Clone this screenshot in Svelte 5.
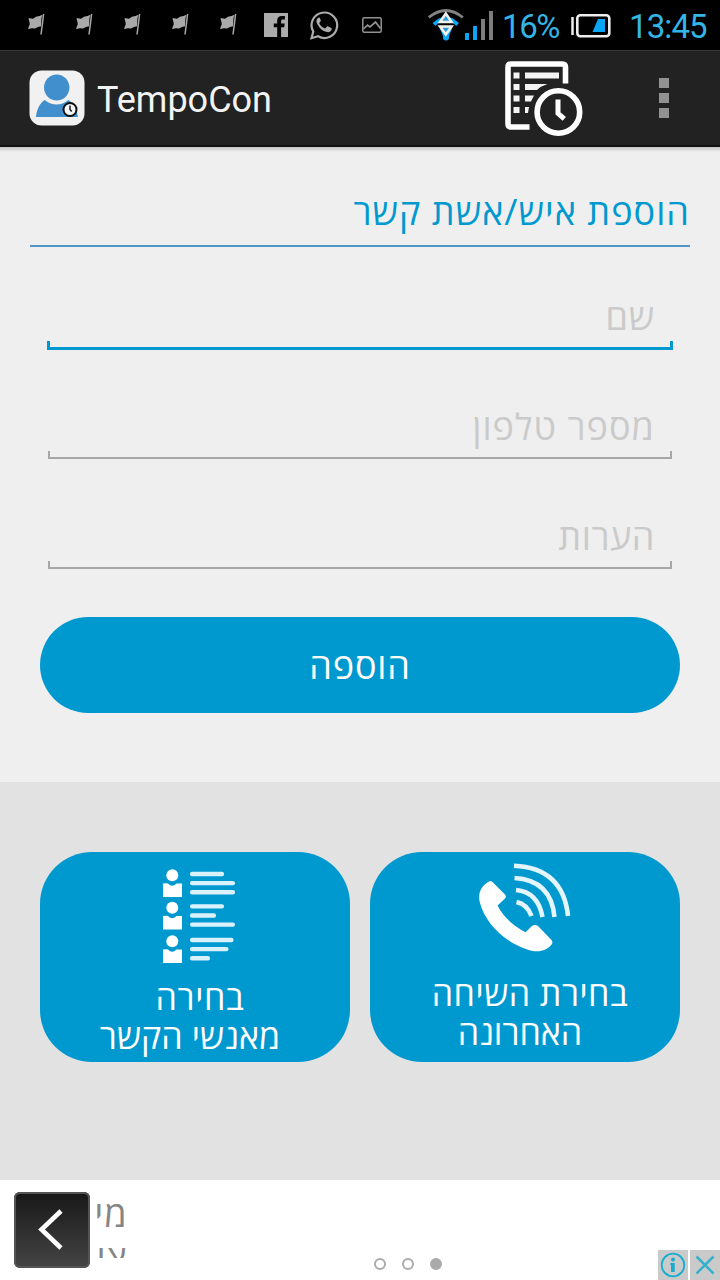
<script>
  const flags = [0, 1, 2, 3, 4];
  const fields = [
    { label: 'שם', focused: true, spacing: 0.8 },
    { label: 'מספר טלפון', focused: false, spacing: 1.05 },
    { label: 'הערות', focused: false, spacing: 0.6 }
  ];
  const contactRows = [
    { y: 0, lines: [34, 45, 45] },
    { y: 32.4, lines: [34, 26, 45] },
    { y: 66, lines: [43.5, 38.5, 20] }
  ];
</script>

<div class="screen">
  <header class="status">
    <div class="notices">
      {#each flags as f (f)}
        <svg class="flag" width="17" height="22" viewBox="0 0 17 22">
          <path d="M.5 4 5 4.8 8 2.8 11.5 2 14.5 .8 13.5 4 13 12.3 10 13 7 14.5 4 14.2 0 15 1.8 10Z" fill="#a9a9a9" />
          <path d="M15.6 0 14.5 9 13 20.5" fill="none" stroke="#a9a9a9" stroke-width="1.5" />
        </svg>
      {/each}
      <svg class="fb" width="24" height="24" viewBox="0 0 24 24">
        <path fill="#ababab" fill-rule="evenodd" d="M0 0h24v24H0zM13.2 24h3.9v-9.7h3.1l.5-3.8h-3.6V8.2c0-1.3.5-1.8 1.8-1.8h2V3h-3c-3.200 0-4.700 1.700-4.700 4.600v2.900H9.800v3.800h3.400z" />
      </svg>
      <svg class="wa" width="30" height="31" viewBox="0 0 30 31">
        <path d="M2.500 28.200 4.300 21.600A12.800 12.700 0 1 1 9.100 26.300Z" fill="none" stroke="#ababab" stroke-width="2.200" />
        <path d="M10.700 7.800c-.8-.5-1.500-.3-2.100.4-1.500 1.600-1.400 3.700-.4 5.700 2 4 5.300 7 9.500 8.200 2.300.6 4.700-.5 5-3 .1-.8-.1-1-.8-1.400l-3-1.400c-.6-.3-.8-.1-1.200.4l-1 1.300c-.4.5-.8.5-1.400.2-2.400-1.100-3.900-2.700-4.900-4.700-.2-.5-.1-.7.3-1.100l1-1.300.1-.8z" fill="#ababab" />
      </svg>
      <svg class="pic" width="20" height="16" viewBox="0 0 20 16">
        <rect x=".8" y=".8" width="18.400" height="14.400" rx="1.500" fill="none" stroke="#929292" stroke-width="1.500" />
        <path d="M1.500 12 5.500 8.200 8 10 13.500 5 18.500 11.500" fill="none" stroke="#929292" stroke-width="1.700" />
      </svg>
    </div>
    <div class="system">
      <svg class="signal" width="68" height="34" viewBox="0 0 68 34">
        <path d="M.8 8.500Q17.800-5.500 34.800 8.500" fill="none" stroke="#828282" stroke-width="2.800" />
        <path d="M6 15.500Q17.800 4 29.600 15.500" fill="none" stroke="#0aa5f5" stroke-width="4" />
        <path d="M12 20h12l-3 7v3q-3 3-6 0v-3z" fill="#0aa5f5" />
        <path d="M12 13 17.800 4.500 23.600 13ZM12 17.500h11.600L17.800 25.500Z" fill="#2f9bd8" stroke="#f1f1ee" stroke-width="2.500" />
        <path d="M37 24h4v7h-4zM45 17h4v14h-4z" fill="#0aa5f5" />
        <path d="M53 10h4v21h-4zM61 2h4v29h-4z" fill="#7d7d7d" />
      </svg>
      <span class="percent">16%</span>
      <svg class="battery" width="40" height="24" viewBox="0 0 40 24">
        <path d="M1.500 3v18" stroke="#eee" stroke-width="2.500" />
        <rect x="6.300" y="1.300" width="32" height="21" rx="3" fill="none" stroke="#eee" stroke-width="2.600" />
        <path d="M27 5h7v13H21.500z" fill="#0aa5f5" />
      </svg>
      <span class="clock">13:45</span>
    </div>
  </header>

  <nav class="actionbar">
    <svg class="logo" width="56" height="56" viewBox="0 0 56 56">
      <rect x=".5" y=".5" width="55" height="55" rx="12" fill="#f1f1f1" />
      <ellipse cx="27.700" cy="17.500" rx="12.700" ry="13" fill="#428fce" />
      <path d="M7 47C7.500 40 10.500 33.500 15.500 30Q27.500 39 39.500 30C45 34 48 40 49 47Z" fill="#428fce" />
      <circle cx="41" cy="39.500" r="6.500" fill="#f5f5f5" stroke="#101010" stroke-width="2" />
      <path d="M41 35.500v4l1.700 2" fill="none" stroke="#101010" stroke-width="1.400" />
    </svg>
    <h1>TempoCon</h1>
    <svg class="history" width="80" height="76" viewBox="0 0 80 76">
      <path d="M24.500 66H6.200Q3 66 3 62.800V6.200Q3 3 6.200 3H57.300Q60.500 3 60.500 6.200V22.500" fill="none" stroke="#fff" stroke-width="5.600" />
      <path d="M8.500 11.500h6v6h-6zM8.500 23h6v6h-6zM8.500 34.500h6v6h-6zM8.500 46h6v6h-6zM20 11.500h34v6H20zM20 23h22.500Q36 25 32 29H20zM20 34.500h9L26 40.500h-6zM20 46h4l-1 6h-3z" fill="#f4f4f4" />
      <circle cx="53.400" cy="51" r="21.300" fill="none" stroke="#fff" stroke-width="5.600" />
      <path d="M53 38.500v13.800l6.300 5.500" fill="none" stroke="#fff" stroke-width="5" />
    </svg>
    <div class="overflow"><i></i><i></i><i></i></div>
  </nav>

  <main class="form" dir="rtl">
    <h2><span>הוספת איש/אשת קשר</span></h2>
    {#each fields as field (field.label)}
      <div class="field" class:focused={field.focused}><span style="letter-spacing: {field.spacing}px">{field.label}</span></div>
    {/each}
    <button class="add">הוספה</button>
  </main>

  <section class="choices">
    <button class="card contacts">
      <svg width="76" height="98" viewBox="0 0 76 98">
        {#each contactRows as row}
          <g transform="translate(0 {row.y})">
            <path d="M1 15.500Q5 15 6 15.500 10 20 14.500 15.500H20V29H1Z" fill="#fff" />
            <circle cx="10.300" cy="7.300" r="6" fill="#fff" />
            {#each row.lines as length, i}
              <rect x="28" y={3.8 + i * 9.1} width={length} height="4.400" rx="2" fill="#d9f1fb" />
            {/each}
          </g>
        {/each}
      </svg>
      <span class="line l1" dir="rtl">בחירה</span>
      <span class="line l2" dir="rtl">מאנשי הקשר</span>
    </button>
    <button class="card recent">
      <svg width="96" height="92" viewBox="0 0 96 92">
        <path d="M11.500 18.300Q13 17.500 14.500 19L27 31.500Q28.800 33.500 27 35.500L19.500 42.500Q28 59 47.500 69.300L54 63Q57 61 60 63L73.500 77Q75 79 74 81C68 89 58 90 48 86 25 78 7 59 2 40-1 30 4 22 11.500 18.300Z" fill="#fff" />
        <path d="M38.500 39Q49 41 53.500 53M38 27Q60 29 64.500 54M36.500 15Q73 17 76.500 54M36 2.800Q85 5 90 53" fill="none" stroke="#e3f5fd" stroke-width="4.600" />
      </svg>
      <span class="line l1" dir="rtl">בחירת השיחה</span>
      <span class="line l2" dir="rtl">האחרונה</span>
    </button>
  </section>

  <footer class="ad">
    <div class="back">
      <svg width="76" height="76" viewBox="0 0 76 76"><path d="M47 19 27.500 37.500 47 56" fill="none" stroke="#fff" stroke-width="4.600" /></svg>
    </div>
    <div class="adtext" dir="rtl"><span>מי</span><span>צי</span></div>
    <div class="dots"><i></i><i></i><i class="on"></i></div>
    <div class="badges">
      <svg width="30" height="30" viewBox="0 0 30 30">
        <path d="M0 0h30v30H0z" fill="#cacaca" />
        <circle cx="15" cy="15" r="11.300" fill="none" stroke="#16adcf" stroke-width="1.800" />
        <circle cx="15" cy="9.500" r="2" fill="#16adcf" />
        <path d="M12.500 13h4.200v9H13v-7h-1z" fill="#16adcf" />
      </svg>
      <svg width="30" height="30" viewBox="0 0 30 30">
        <path d="M0 0h30v30H0z" fill="#cacaca" />
        <path d="M6.500 6.500 23.500 23.500M23.500 6.500 6.500 23.500" stroke="#35b1cc" stroke-width="2.500" />
      </svg>
    </div>
  </footer>
</div>

<style>
  :global(body) { margin: 0; }
  .screen {
    width: 720px; height: 1280px; overflow: hidden;
    display: flex; flex-direction: column;
    font-family: Roboto, "Open Sans", "Noto Sans", sans-serif;
    background: #efefef;
  }
  * { box-sizing: border-box; }
  svg { display: block; flex: none; }
  h1, h2 { margin: 0; font-weight: 400; }
  button { border: 0; padding: 0; color: #fff; background: #0099cf; }
  h2, .field, .add, .card, .adtext { font-family: "Open Sans", "Noto Sans", sans-serif; }

  .status { height: 50px; flex: none; background: #000; display: flex; justify-content: space-between; }
  .notices { display: flex; align-items: center; padding-left: 28px; }
  .flag { margin-right: 31px; }
  .fb { margin-left: -4px; }
  .wa { margin-left: 21px; }
  .pic { margin-left: 23px; }
  .system { display: flex; align-items: center; padding-right: 12px; color: #33b5e5; font-size: 33px; letter-spacing: -.9px; white-space: nowrap; }
  .signal { margin-top: 2px; }
  .percent { margin: 2px 0 0 6px; width: 57px; letter-spacing: -1.4px; }
  .battery { margin-left: 12px; margin-top: 1px; }
  .clock { margin: 2px 0 0 18px; width: 79px; }

  .actionbar {
    height: 97px; flex: none; background: #222; border-top: 1px solid #363636; border-bottom: 2px solid #111;
    display: flex; align-items: center; padding-left: 29px; color: #f3f3f3;
  }
  h1 { font-size: 36px; margin: 3px 0 0 12px; width: 178px; }
  .history { margin: 2px 0 0 230px; }
  .overflow { margin-left: 74px; display: flex; flex-direction: column; gap: 5px; }
  .overflow i { width: 10px; height: 10px; background: #929292; }

  .form { height: 635px; flex: none; padding: 30px 30px 0; background: linear-gradient(#c5c5c5, #efefef 5px); }
  h2 { height: 70px; border-bottom: 2px solid #4c96c8; color: #0099cf; font-size: 36px; line-height: 70px; letter-spacing: 1.03px; white-space: nowrap; }
  .field { height: 110px; margin: 0 18px; padding: 45px 17px 0; color: #cacaca; font-size: 36px; line-height: 50px; position: relative; }
  .field::after {
    content: ''; position: absolute; left: 0; right: 0; bottom: 8px; height: 6px;
    border: 2px solid #a7a7a7; border-top: 0;
  }
  .field.focused::after { left: -1px; right: -1px; bottom: 7px; height: 6px; border-color: #0099cf; border-width: 0 3px 3px; }
  .add { display: block; width: 640px; height: 96px; margin: 40px 10px 0; padding-top: 2px; border-radius: 48px; font-size: 36px; line-height: 94px; letter-spacing: .8px; }

  .choices { height: 398px; flex: none; background: #e2e2e2; padding: 70px 40px 0; display: flex; gap: 20px; }
  .card { width: 310px; height: 210px; border-radius: 52px; display: flex; flex-direction: column; align-items: center; justify-content: flex-start; font-size: 34px; }
  .line { height: 39px; line-height: 39px; white-space: nowrap; }
  .contacts svg { margin: 16px 0 12px 10px; }
  .contacts .l1 { margin-left: 10px; letter-spacing: .7px; }
  .contacts .l2 { margin-right: 10px; letter-spacing: .1px; }
  .recent svg { margin: 11px 0 19px 2px; }
  .recent .l1 { margin-left: 10px; letter-spacing: .5px; }
  .recent .l2 { margin-right: 10px; }

  .ad { height: 100px; flex: none; background: #fff; display: flex; padding-left: 14px; }
  .back { width: 76px; height: 76px; margin-top: 12px; border-radius: 6px; background: linear-gradient(#171717, #454545); box-shadow: inset 0 0 0 2px #545454; }
  .adtext { margin: 12px 0 0 5px; width: 33px; height: 66px; overflow: hidden; font-size: 36px; line-height: 44px; letter-spacing: 1.3px; color: #858585; }
  .adtext span { display: block; }
  .dots { display: flex; gap: 16px; margin: 78px 0 0 246px; }
  .dots i { width: 12px; height: 12px; border: 2px solid #aaa; border-radius: 50%; }
  .dots .on { background: #aaa; }
  .badges { margin: 70px 0 0 auto; display: flex; gap: 2px; }
</style>
